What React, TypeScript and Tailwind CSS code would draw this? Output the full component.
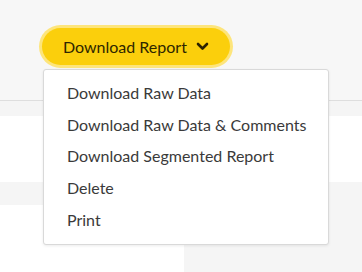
import type { ReactNode } from "react";

const menuItems = [
  "Download Raw Data",
  "Download Raw Data & Comments",
  "Download Segmented Report",
  "Delete",
  "Print",
];

function Chevron() {
  return (
    <svg width="13" height="9" viewBox="0 0 13 9" className="ml-[9px]">
      <polyline
        points="2,2 6.5,6.5 11,2"
        fill="none"
        stroke="#2b2200"
        strokeWidth="2.6"
        strokeLinecap="round"
        strokeLinejoin="round"
      />
    </svg>
  );
}

function Card({ children, className }: { children?: ReactNode; className: string }) {
  return <div className={`bg-white ${className}`}>{children}</div>;
}

export default function App() {
  return (
    <div
      className="relative h-[272px] w-[362px] overflow-hidden bg-[#f7f7f7]"
      style={{ fontFamily: "Lato, 'Open Sans', sans-serif" }}
    >
      {/* ── Toolbar ── */}
      <div className="h-[100px] pl-[42px] pt-[28px]">
        <button className="flex h-[37px] w-[188px] items-center rounded-full bg-[#fbcf0c] pl-[21px] text-[16px] text-[#2e2600] ring-[3px] ring-[#fde57c]">
          Download Report
          <Chevron />
        </button>
      </div>

      {/* ── Content behind menu ── */}
      <div className="border-t border-[#dedede] bg-[#f5f5f5] pt-[15px]">
        <Card className="h-[66px] w-full" />
        <div className="h-[23px]" />
        <Card className="h-[70px] w-[184px]" />
      </div>

      {/* ── Dropdown menu ── */}
      <div className="absolute left-[43px] top-[69px] w-[286px] rounded-[3px] border border-[#d9d9d9] bg-white pb-[9px] pt-[7px] shadow-[0_1px_3px_rgba(0,0,0,0.08)]">
        {menuItems.map((item) => (
          <div
            key={item}
            className="flex h-[31.7px] items-center pl-[23px] text-[16px] text-[#3a3a3a]"
          >
            {item}
          </div>
        ))}
      </div>
    </div>
  );
}
